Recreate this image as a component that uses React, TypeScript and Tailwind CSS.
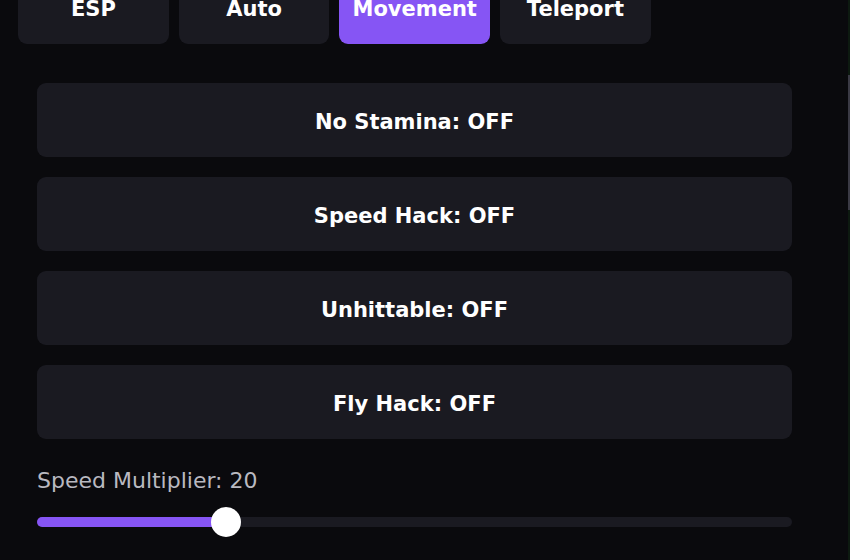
import React, { useState } from 'react';

const tabs = ['ESP', 'Auto', 'Movement', 'Teleport'];

const toggles = ['No Stamina', 'Speed Hack', 'Unhittable', 'Fly Hack'];

export default function App() {
  const [active, setActive] = useState('Movement');
  const [state, setState] = useState<Record<string, boolean>>({});
  const [speed] = useState(20);

  const pct = 25;

  return (
    <div
      className="flex w-[850px] h-[560px] overflow-hidden bg-[#0a0a0d] text-white"
      style={{ fontFamily: '"DejaVu Sans", "Liberation Sans", sans-serif' }}
    >
      <div className="flex-1 flex flex-col">
        {/* tabs */}
        <div className="flex gap-[10px] pl-[18px] mt-[-28px]">
          {tabs.map((t) => (
            <button
              key={t}
              onClick={() => setActive(t)}
              className={
                'w-[150.7px] h-[72px] pt-[3px] rounded-[9px] flex items-center justify-center text-[21px] font-bold ' +
                (active === t ? 'bg-[#8655f4]' : 'bg-[#1a1a21]')
              }
            >
              {t}
            </button>
          ))}
        </div>

        {/* toggles */}
        <div className="flex flex-col gap-[20px] mt-[39px] ml-[37px] w-[755px]">
          {toggles.map((name) => (
            <button
              key={name}
              onClick={() => setState({ ...state, [name]: !state[name] })}
              className="h-[74px] pt-[6px] rounded-[9px] bg-[#1a1a21] flex items-center justify-center text-[21px] font-bold"
            >
              {name}: {state[name] ? 'ON' : 'OFF'}
            </button>
          ))}
        </div>

        {/* slider */}
        <div className="ml-[37px] w-[755px] mt-[28px]">
          <div className="text-[22px] text-[#b9b9c0] leading-[28px]">Speed Multiplier: {speed}</div>
          <div className="relative mt-[22px] h-[10px] rounded-full bg-[#1a1a21]">
            <div className="h-full rounded-full bg-[#8655f4]" style={{ width: `${pct}%` }} />
            <div
              className="absolute top-1/2 w-[30px] h-[30px] -translate-x-1/2 -translate-y-1/2 rounded-full bg-white"
              style={{ left: `${pct}%` }}
            />
          </div>
        </div>
      </div>

      {/* right edge scrollbar */}
      <div className="w-[2px] flex flex-col bg-[#0d1a10]">
        <div className="h-[75px]" />
        <div className="h-[135px] bg-[#3a3a44]" />
      </div>
    </div>
  );
}
